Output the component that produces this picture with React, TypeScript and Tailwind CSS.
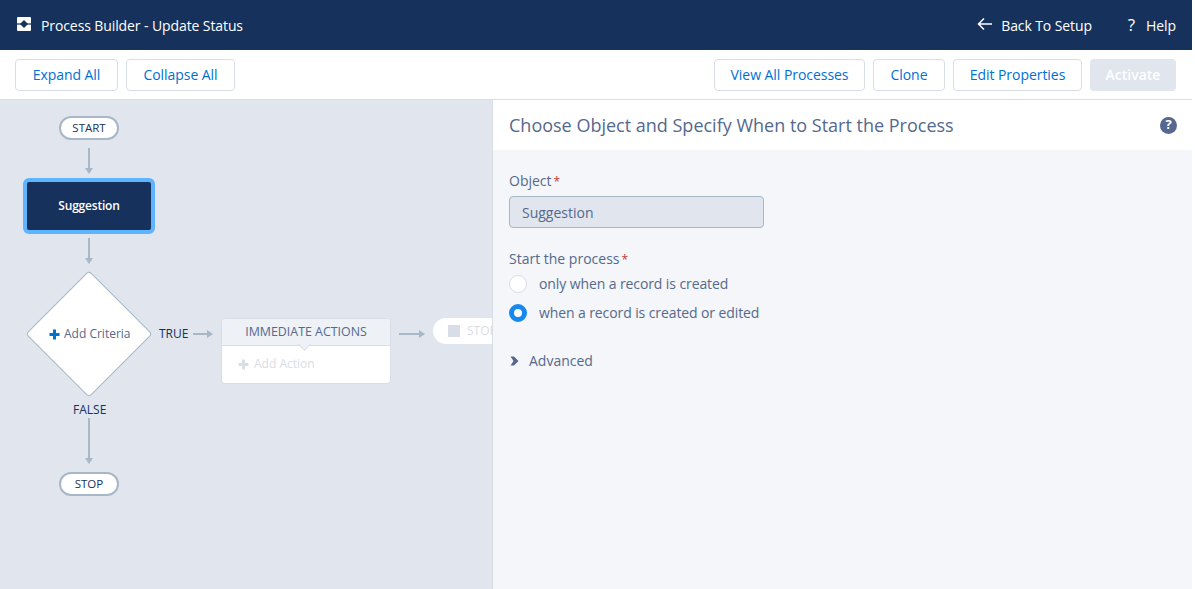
import * as React from "react";

const blue = "text-[#0070d2]";

function ArrowV({ h }: { h: number }) {
  return (
    <svg width="10" height={h} viewBox={`0 0 10 ${h}`} className="block">
      <rect x="4" y="0" width="2" height={h - 3} fill="#a8b7c7" />
      <path d={`M1 ${h - 6}H9L5 ${h}Z`} fill="#a8b7c7" />
    </svg>
  );
}

function ArrowH({ w }: { w: number }) {
  return (
    <svg width={w} height="10" viewBox={`0 0 ${w} 10`} className="block">
      <rect x="0" y="4" width={w - 3} height="2" fill="#a8b7c7" />
      <path d={`M${w - 6} 1V9L${w} 5Z`} fill="#a8b7c7" />
    </svg>
  );
}

function Plus({ color, size = 11 }: { color: string; size?: number }) {
  return (
    <svg width={size} height={size} viewBox="0 0 11 11" className="block shrink-0">
      <path d="M4 0.5h3v3.5h3.5v3H7v3.500H4V7H0.500V4H4z" fill={color} />
    </svg>
  );
}

function TopButton({ label, w }: { label: string; w: string }) {
  return (
    <button className={`${w} h-8 rounded-[4px] border border-[#d8dde6] bg-white text-[14px] tracking-[-0.05px] ${blue}`}>
      {label}
    </button>
  );
}

function Pill({ label }: { label: string }) {
  return (
    <div className="flex h-[24px] w-[60px] items-center justify-center rounded-full border-2 border-[#a8b7c7] bg-white text-[11.5px] text-[#16325c]">
      {label}
    </div>
  );
}

function Radio({ checked, label }: { checked?: boolean; label: string }) {
  return (
    <div className="flex items-center gap-[12px] text-[14px] leading-[20px] tracking-[-0.1px] text-[#54698d]">
      {checked ? (
        <span className="box-border h-[18px] w-[18px] rounded-full border-[5px] border-[#1589ee] bg-white" />
      ) : (
        <span className="box-border h-[18px] w-[18px] rounded-full border border-[#d8dde6] bg-white" />
      )}
      <span>{label}</span>
    </div>
  );
}

function Canvas() {
  return (
    <div className="relative w-[493px] shrink-0 overflow-hidden border-r border-[#d8dde6] bg-[#e0e5ee]">
      <div className="absolute left-[59px] top-[16px]"><Pill label="START" /></div>
      <div className="absolute left-[84px] top-[48px]"><ArrowV h={26} /></div>

      <div className="absolute left-[23px] top-[78px] flex h-[56px] w-[132px] items-center justify-center rounded-[6px] border-[4px] border-[#5eb4ff] bg-[#16325c] text-[12px] font-semibold tracking-[-0.2px] text-white">
        Suggestion
      </div>
      <div className="absolute left-[84px] top-[138px]"><ArrowV h={26} /></div>

      <div className="absolute left-[44px] top-[189px] h-[90px] w-[90px] rotate-45 rounded-[4px] border border-[#a8b7c7] bg-white" />
      <div className="absolute left-[49px] top-[225px] flex items-center gap-[4px] text-[12px] text-[#54698d]">
        <Plus color="#0070d2" />
        <span>Add Criteria</span>
      </div>

      <div className="absolute left-[159px] top-[225px] text-[12px] text-[#16325c]">TRUE</div>
      <div className="absolute left-[193px] top-[229px]"><ArrowH w={20} /></div>

      <div className="absolute left-[221px] top-[218px] h-[66px] w-[170px] rounded-[4px] border border-[#d8dde6] bg-white">
        <div className="relative flex h-[27px] items-center justify-center rounded-t-[4px] border-b border-[#d8dde6] bg-[#eef1f6] pt-[1px] text-[12.4px] text-[#54698d]">
          IMMEDIATE ACTIONS
          <span className="absolute left-[78px] top-[21px] h-[9px] w-[9px] rotate-45 border-b border-r border-[#d8dde6] bg-[#eef1f6]" />
        </div>
        <div className="flex h-[36px] items-center gap-[5px] pl-[16px] text-[12px] text-[#d8dde6]">
          <Plus color="#d8dde6" />
          <span>Add Action</span>
        </div>
      </div>

      <div className="absolute left-[399px] top-[229px]"><ArrowH w={26} /></div>
      <div className="absolute left-[433px] top-[218px] flex h-[26px] w-[80px] items-center gap-[7px] rounded-full bg-white pl-[15px] text-[12px] text-[#d8dde6]">
        <span className="h-3 w-3 bg-[#d8dde6]" />
        <span>STOP</span>
      </div>

      <div className="absolute left-[73px] top-[301px] text-[12px] text-[#16325c]">FALSE</div>
      <div className="absolute left-[84px] top-[318px]"><ArrowV h={46} /></div>
      <div className="absolute left-[59px] top-[372px]"><Pill label="STOP" /></div>
    </div>
  );
}

export default function App() {
  return (
    <div className="flex h-[589px] w-[1195px] flex-col overflow-hidden bg-white pr-[3px] font-['Open_Sans','Liberation_Sans',sans-serif]">
      <div className="flex h-[50px] shrink-0 items-center justify-between bg-[#16325c] pl-[17px] pr-[16px] text-[14px] font-medium tracking-[-0.1px] text-white">
        <div className="flex items-center gap-[10px]">
          <svg width="14" height="14" viewBox="0 0 14 14" className="mb-[2px] block">
            <rect x="0" y="0" width="14" height="14" rx="1" fill="#fff" />
            <rect x="0" y="6.400" width="14" height="1.200" fill="#16325c" />
            <path d="M7 3L11 7 7 11 3 7Z" fill="#16325c" />
          </svg>
          <span>Process Builder - Update Status</span>
        </div>
        <div className="flex items-center">
          <svg width="15" height="14" viewBox="0 0 15 14" fill="none" stroke="#fff" strokeWidth="1.500" className="mb-[3px] mr-[9px] block">
            <path d="M15 7H1.500M7 1.500L1.500 7 7 12.500" />
          </svg>
          <span>Back To Setup</span>
          <span className="ml-[36px] mr-[11px] text-[17px] font-normal">?</span>
          <span>Help</span>
        </div>
      </div>

      <div className="flex h-[50px] shrink-0 items-center justify-between border-b border-[#d8dde6] pl-[15px] pr-[16px]">
        <div className="flex gap-[8px]">
          <TopButton label="Expand All" w="w-[103px]" />
          <TopButton label="Collapse All" w="w-[109px]" />
        </div>
        <div className="flex gap-[8px]">
          <TopButton label="View All Processes" w="w-[151px]" />
          <TopButton label="Clone" w="w-[72px]" />
          <TopButton label="Edit Properties" w="w-[129px]" />
          <button className="h-8 w-[86px] rounded-[4px] bg-[#e0e5ee] text-[14px] font-semibold text-white">Activate</button>
        </div>
      </div>

      <div className="flex min-h-0 flex-1">
        <Canvas />
        <div className="flex min-w-0 flex-1 flex-col bg-[#f4f6f9]">
          <div className="flex h-[50px] shrink-0 items-center justify-between bg-white pl-[16px] pr-[15px]">
            <h1 className="text-[18px] text-[#54698d]">Choose Object and Specify When to Start the Process</h1>
            <span className="flex h-[17px] w-[17px] items-center justify-center rounded-full bg-[#54698d] text-[13px] font-bold text-white">?</span>
          </div>
          <div className="flex flex-col pl-[16px] pt-[21px] text-[14px] text-[#54698d]">
            <div className="leading-[20px]">Object<span className="ml-[2px] text-[12px] text-[#c23934]">*</span></div>
            <div className="mt-[4px] flex h-8 w-[255px] items-center rounded-[4px] border border-[#a8b7c7] bg-[#e0e5ee] pl-[12px]">Suggestion</div>
            <div className="mt-[21px] leading-[20px]">Start the process<span className="ml-[2px] text-[12px] text-[#c23934]">*</span></div>
            <div className="mt-[4px] flex flex-col gap-[9px]">
              <Radio label="only when a record is created" />
              <Radio checked label="when a record is created or edited" />
            </div>
            <div className="mt-[27px] flex items-center gap-[10px]">
              <svg width="10" height="10" viewBox="0 0 10 10" className="block">
                <path d="M1.500 0.500H5L9.500 5 5 9.500H1.500L4.500 5Z" fill="#54698d" />
              </svg>
              <span>Advanced</span>
            </div>
          </div>
        </div>
      </div>
    </div>
  );
}
